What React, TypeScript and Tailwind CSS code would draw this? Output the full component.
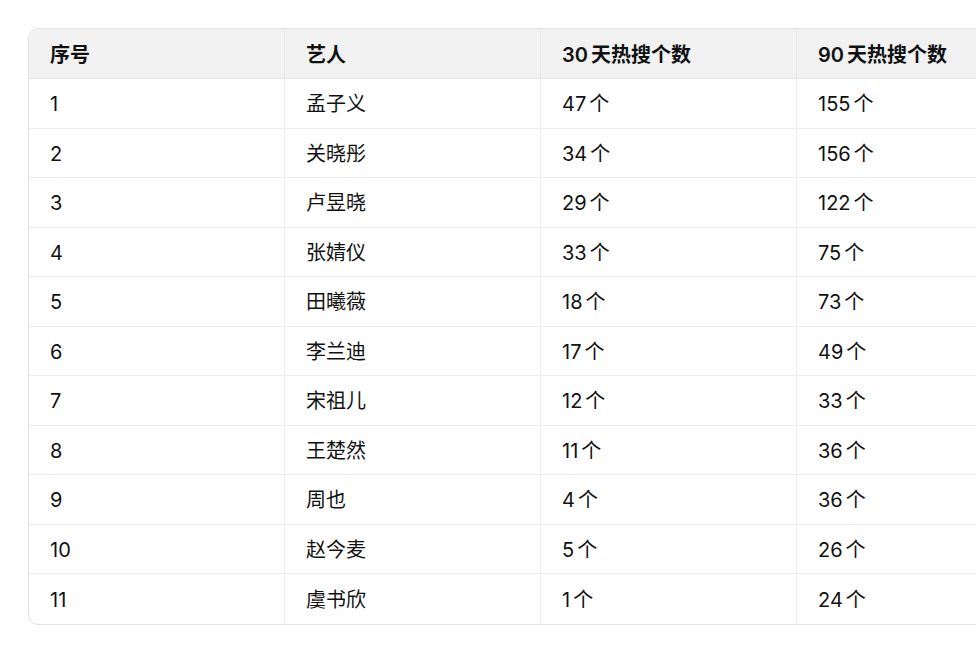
import React from 'react';

const HEADERS = ['序号', '艺人', '30|天热搜个数', '90|天热搜个数'];

const ROWS: [string, string, string, string][] = [
  ['1', '孟子义', '47|个', '155|个'],
  ['2', '关晓彤', '34|个', '156|个'],
  ['3', '卢昱晓', '29|个', '122|个'],
  ['4', '张婧仪', '33|个', '75|个'],
  ['5', '田曦薇', '18|个', '73|个'],
  ['6', '李兰迪', '17|个', '49|个'],
  ['7', '宋祖儿', '12|个', '33|个'],
  ['8', '王楚然', '11|个', '36|个'],
  ['9', '周也', '4|个', '36|个'],
  ['10', '赵今麦', '5|个', '26|个'],
  ['11', '虞书欣', '1|个', '24|个'],
];

const font = "font-['Inter','Noto_Sans_CJK_SC',sans-serif]";

// digits and CJK get a little breathing room, like the native autospace
const Cell: React.FC<{ text: string }> = ({ text }) => {
  const [num, rest] = text.split('|');
  if (rest === undefined) return <>{text}</>;
  return (
    <>
      <span>{num}</span>
      <span className="ml-[3px]">{rest}</span>
    </>
  );
};

const App: React.FC = () => {
  return (
    <div className={`w-[976px] h-[659px] overflow-hidden bg-white pt-[28px] pl-[28px] ${font}`}>
      <div className="w-[1100px] rounded-[10px] border border-[#e2e2e2] overflow-hidden text-[20px] text-[#111]">
        {/* Header */}
        <div className="flex h-[50px] bg-[#f2f2f2] border-b border-[#e6e6e6]">
          {HEADERS.map((h, i) => (
            <div
              key={i}
              className={`w-[256px] shrink-0 flex items-center pl-[21px] pt-[2px] font-semibold ${i < 3 ? 'border-r border-[#e8e8e8]' : ''}`}
            >
              <Cell text={h} />
            </div>
          ))}
        </div>

        {/* Body */}
        {ROWS.map((row, r) => (
          <div
            key={r}
            className={`flex h-[49.5px] ${r < ROWS.length - 1 ? 'border-b border-[#ececec]' : ''}`}
          >
            {row.map((cell, i) => (
              <div
                key={i}
                className={`w-[256px] shrink-0 flex items-center pl-[21px] pt-[2px] ${i < 3 ? 'border-r border-[#ededed]' : ''}`}
              >
                <Cell text={cell} />
              </div>
            ))}
          </div>
        ))}
      </div>
    </div>
  );
};

export default App;
